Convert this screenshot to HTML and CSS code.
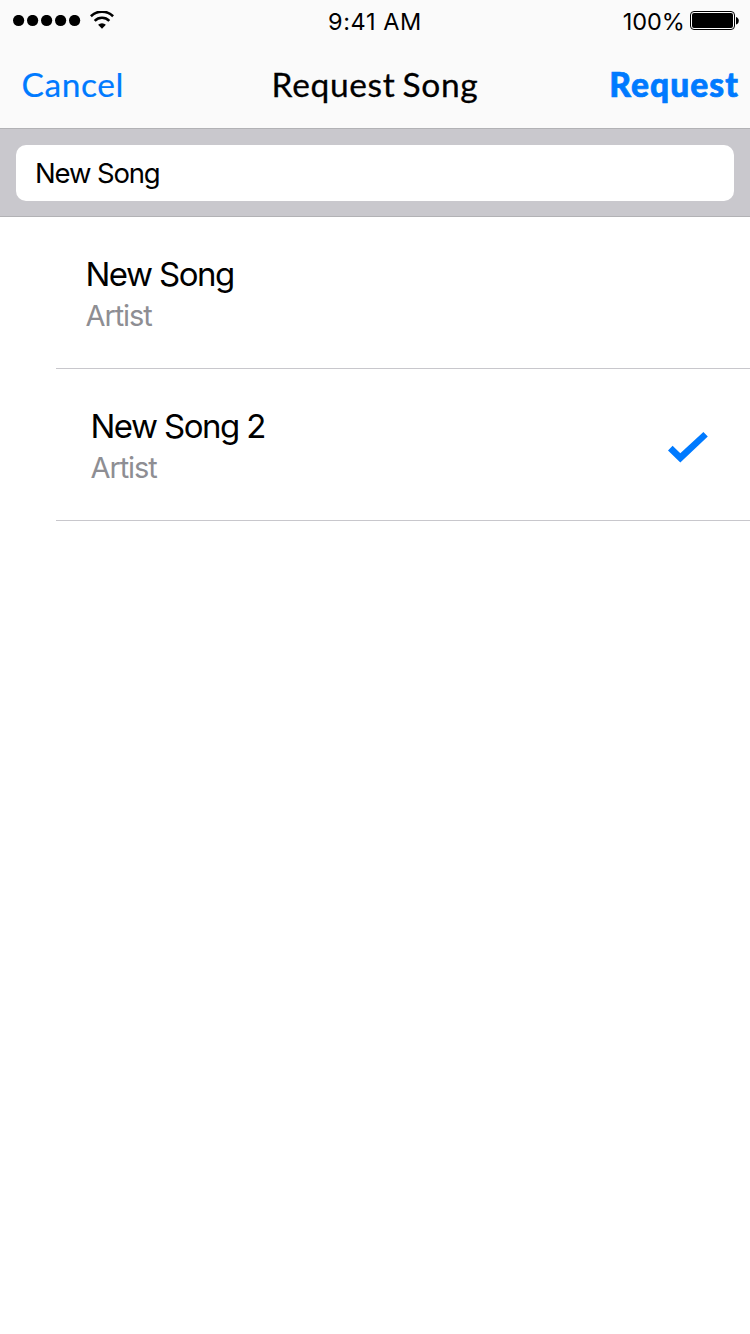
FILE: index.html
```
<!DOCTYPE html>
<html lang="en">
<head>
<meta charset="utf-8">
<title>Request Song</title>
<link rel="stylesheet" href="styles.css">
</head>
<body>
<header class="header">
  <div class="status">
    <div class="signal">
      <svg class="dots" width="68" height="12" viewBox="0 0 68 12"><circle cx="5.6" cy="5.5" r="5.6"/><circle cx="19.6" cy="5.5" r="5.6"/><circle cx="33.6" cy="5.5" r="5.6"/><circle cx="47.6" cy="5.5" r="5.6"/><circle cx="61.6" cy="5.5" r="5.6"/></svg>
      <svg class="wifi" width="24" height="18" viewBox="0 0 24 18"><path d="M.9 5.2a15.8 15.8 0 0 1 22.2 0M4.7 9.8a10.3 10.3 0 0 1 14.6 0" fill="none" stroke="#000" stroke-width="2.6"/><path d="M8.1 13.8a5.6 5.6 0 0 1 7.8 0L12 17.8z"/></svg>
    </div>
    <div class="clock">9:41 AM</div>
    <div class="power">
      <span class="percent">100%</span>
      <svg width="49" height="20" viewBox="0 0 49 20"><rect x=".5" y=".5" width="44" height="18" rx="3.5" fill="#fff" stroke="#000"/><rect x="2" y="2" width="41" height="15" rx="2"/><path d="M46 6c3.7.8 3.7 6.8 0 7.6z"/></svg>
    </div>
  </div>
  <nav class="nav">
    <a class="cancel">Cancel</a>
    <h1 class="title">Request Song</h1>
    <a class="request">Request</a>
  </nav>
</header>
<div class="search"><div class="field">New Song</div></div>
<main class="list">
  <div class="row">
    <div class="song"><div class="name">New Song</div><div class="artist">Artist</div></div>
  </div>
  <div class="row chosen">
    <div class="song"><div class="name">New Song 2</div><div class="artist">Artist</div></div>
    <svg class="check" width="40" height="31" viewBox="0 0 40 31"><path d="M0 18.4 4.6 13.7 12.3 21.3 35.4 0 39.8 4.5 12.3 30.5z" fill="#007aff"/></svg>
  </div>
</main>
</body>
</html>
```
FILE: styles.css
```
* { box-sizing: border-box; }
body {
  margin: 0;
  width: 750px;
  height: 1334px;
  background: #fff;
  color: #000;
  font-family: Inter, "Liberation Sans", sans-serif;
}
svg { display: block; }
.header {
  height: 129px;
  background: #fafafa;
  border-bottom: 1px solid #b2b2b5;
}
.status {
  display: grid;
  grid-template-columns: 1fr auto 1fr;
  height: 40px;
  padding: 0 11px 0 13px;
}
.signal { display: flex; gap: 8.6px; }
.dots { margin-top: 15px; }
.wifi { margin-top: 11px; }
.clock, .percent {
  font-size: 23.5px;
  line-height: 43px;
}
.clock { letter-spacing: .6px; margin-left: -2px; }
.percent { letter-spacing: -.1px; }
.power { display: flex; justify-content: flex-end; gap: 5.4px; }
.power svg { margin-top: 11px; }
.nav {
  display: grid;
  grid-template-columns: 1fr auto 1fr;
  height: 88px;
  padding: 0 11px;
  font: 33.5px/88px Lato, sans-serif;
}
.title {
  margin: 0;
  font: inherit;
  letter-spacing: .65px;
  word-spacing: -2px;
  -webkit-text-stroke: .3px #000;
}
.cancel, .request { color: #007aff; }
.cancel {
  padding-left: 10.5px;
  letter-spacing: .6px;
  -webkit-text-stroke: .2px #007aff;
}
.request {
  font-weight: 900;
  text-align: right;
  letter-spacing: 1.1px;
  -webkit-text-stroke: .7px #007aff;
}
.search {
  height: 88px;
  padding: 16px 16px 15px;
  background: #c9c8cd;
  border-bottom: 1px solid #b2b2b5;
}
.field {
  height: 56px;
  padding-left: 19px;
  background: #fff;
  border-radius: 10px;
  font-size: 27.5px;
  line-height: 57px;
  letter-spacing: -1.15px;
}
.row {
  display: flex;
  justify-content: space-between;
  height: 152px;
  margin-left: 56px;
  padding: 37px 42px 0 29.5px;
  border-bottom: 1px solid #c8c7cc;
}
.chosen { padding-left: 34.5px; }
.name { font-size: 33px; line-height: 41px; letter-spacing: -1.55px; }
.artist { font-size: 29px; line-height: 42px; color: #8e8e93; letter-spacing: -1.1px; }
.check { margin-top: 26px; }
```
